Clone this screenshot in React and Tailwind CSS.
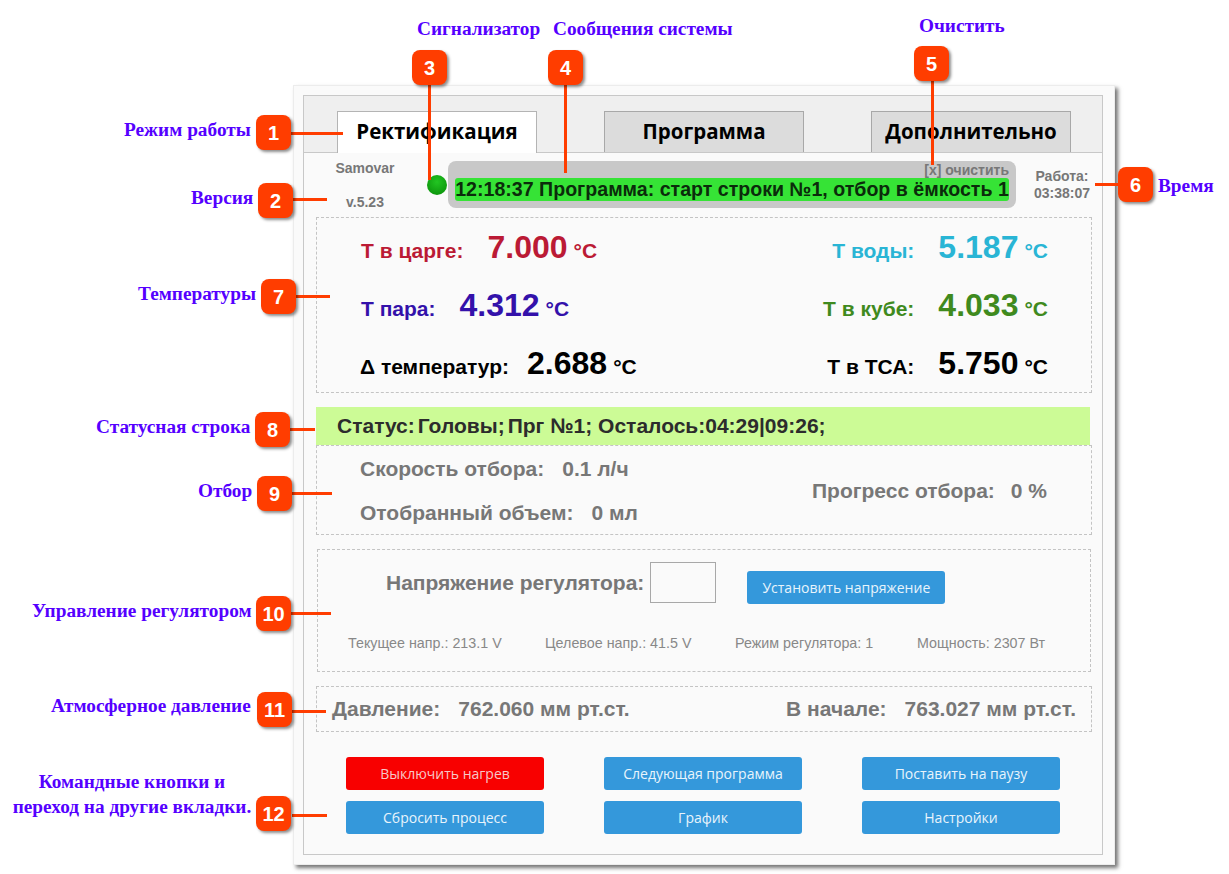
const callouts = [
  { n: 1, box: 'left-[256px] top-[115px]' },
  { n: 2, box: 'left-[258px] top-[183px]' },
  { n: 3, box: 'left-[412px] top-[50px]' },
  { n: 4, box: 'left-[548px] top-[50px]' },
  { n: 5, box: 'left-[914px] top-[46px]' },
  { n: 6, box: 'left-[1118px] top-[167px]' },
  { n: 7, box: 'left-[261px] top-[279px]' },
  { n: 8, box: 'left-[255px] top-[412px]' },
  { n: 9, box: 'left-[257px] top-[476px]' },
  { n: 10, box: 'left-[256px] top-[596px]' },
  { n: 11, box: 'left-[257px] top-[692px]' },
  { n: 12, box: 'left-[256px] top-[796px]' },
]

const lines = [
  'left-[291px] top-[132px] w-[52px] h-[3px]',
  'left-[293px] top-[198px] w-[34px] h-[3px]',
  'left-[428px] top-[83px] w-[3px] h-[97px]',
  'left-[564px] top-[83px] w-[3px] h-[90px]',
  'left-[931px] top-[80px] w-[3px] h-[85px]',
  'left-[1095px] top-[183px] w-[23px] h-[3px]',
  'left-[296px] top-[295px] w-[34px] h-[3px]',
  'left-[290px] top-[428px] w-[25px] h-[3px]',
  'left-[292px] top-[492px] w-[40px] h-[3px]',
  'left-[291px] top-[612px] w-[40px] h-[3px]',
  'left-[292px] top-[710px] w-[34px] h-[3px]',
  'left-[292px] top-[814px] w-[35px] h-[3px]',
]

const labels = [
  { text: 'Режим работы', pos: 'left-[124px] top-[120px]' },
  { text: 'Версия', pos: 'left-[191px] top-[188px]' },
  { text: 'Сигнализатор', pos: 'left-[417px] top-[19px]' },
  { text: 'Сообщения системы', pos: 'left-[553px] top-[19px]' },
  { text: 'Очистить', pos: 'left-[919px] top-[16px]' },
  { text: 'Время', pos: 'left-[1158px] top-[176px]' },
  { text: 'Температуры', pos: 'left-[138px] top-[284px]' },
  { text: 'Статусная строка', pos: 'left-[96px] top-[417px]' },
  { text: 'Отбор', pos: 'left-[198px] top-[481px]' },
  { text: 'Управление регулятором', pos: 'left-[32px] top-[601px]' },
  { text: 'Атмосферное давление', pos: 'left-[51px] top-[696px]' },
]

function Tab({ label, active = false }) {
  return (
    <div
      className={
        active
          ? 'relative top-px flex h-[42px] w-[200px] items-center justify-center border border-b-0 border-[#b4b4b4] bg-white pb-0.5 text-[20.5px] font-bold text-black'
          : 'flex h-[41px] w-[200px] items-center justify-center border border-b-0 border-[#a8a8a8] bg-[#dcdcdc] pb-0.5 text-[20.5px] font-bold text-black'
      }
    >
      {label}
    </div>
  )
}

function Temp({ label, value, color, gap = '24px' }) {
  return (
    <div className={`flex items-baseline font-bold ${color}`} style={{ gap }}>
      <span className="text-[21px]">{label}</span>
      <span className="flex items-baseline gap-[6px] text-[32px]">
        {value} <span className="text-[21px]">°C</span>
      </span>
    </div>
  )
}

function Button({ label, red = false, className = 'w-[198px]' }) {
  return (
    <button
      type="button"
      className={`h-[33px] rounded-[3px] text-center font-['Open_Sans',sans-serif] text-[14px] ${className} ${
        red ? 'bg-[#f80000] text-[#f6c8c8]' : 'bg-[#3498db] text-[#e8f4fb]'
      }`}
    >
      {label}
    </button>
  )
}

export default function App() {
  return (
    <div className="relative h-[874px] w-[1229px] overflow-hidden bg-white pl-[293px] pt-[85px] font-['Liberation_Sans',Arial,sans-serif]">
      <div className="h-[780px] w-[822px] border border-[#ececec] bg-[#fafafa] p-[9px] shadow-[3px_3px_4px_rgba(0,0,0,0.55)]">
        <div className="h-[760px] w-[800px] border border-[#c8c8c8]">
          <div className="flex h-[57px] items-end justify-between border-b border-[#c8c8c8] bg-[#efefef] pl-[33px] pr-[31px] font-['Open_Sans',sans-serif]">
            <Tab label="Ректификация" active />
            <Tab label="Программа" />
            <Tab label="Дополнительно" />
          </div>

          <div className="px-3">
            <div className="flex h-[64px]">
              <div className="flex w-[98px] shrink-0 flex-col items-center pt-[5px] text-[14px] font-bold text-[#777]">
                <span>Samovar</span>
                <span className="mt-[13px]">v.5.23</span>
              </div>
              <div className="ml-[13px] mt-[22px] h-5 w-5 shrink-0 rounded-full bg-[radial-gradient(circle_at_50%_35%,#22c522,#078a07)]" />
              <div className="ml-[1px] mt-[8px] h-[47px] w-[568px] shrink-0 rounded-lg bg-[#c8c8c8] px-[7px]">
                <div className="h-[17px] text-right text-[14px] font-bold leading-[18px] text-[#777]">[x] очистить</div>
                <div className="h-[23px] rounded-[3px] bg-[#36e336] text-center text-[19.6px] font-bold leading-[23px] whitespace-nowrap text-[#0b2b0b]">
                  12:18:37 Программа: старт строки №1, отбор в ёмкость 1
                </div>
              </div>
              <div className="ml-[10px] flex w-[72px] shrink-0 flex-col items-center pt-[15px] text-[14px] font-bold leading-[17px] text-[#777]">
                <span>Работа:</span>
                <span>03:38:07</span>
              </div>
            </div>

            <div className="flex h-[176px] w-[776px] justify-between border border-dashed border-[#c4c4c4] pb-[5px] pl-[44px] pr-[43px] pt-[5px]">
              <div className="flex flex-col justify-between">
                <Temp label="Т в царге:" value="7.000" color="text-[#bb1a35]" />
                <Temp label="Т пара:" value="4.312" color="text-[#3311aa]" />
                <div className="-ml-px">
                  <Temp label="Δ температур:" value="2.688" color="text-black" gap="18px" />
                </div>
              </div>
              <div className="flex flex-col items-end justify-between">
                <Temp label="Т воды:" value="5.187" color="text-[#29b5d5]" />
                <Temp label="Т в кубе:" value="4.033" color="text-[#3f8a1e]" />
                <Temp label="Т в ТСА:" value="5.750" color="text-black" />
              </div>
            </div>

            <div className="mt-[14px] flex h-[38px] w-[774px] items-center gap-[3px] whitespace-nowrap bg-[#ccfb96] pl-[21px] text-[21px] font-bold text-[#2c2c2c]">
              <span>Статус:</span>
              <span>Головы;</span>
              <span>Прг №1; Осталось:04:29|09:26;</span>
            </div>

            <div className="flex h-[90px] w-[776px] items-center justify-between border border-dashed border-[#c4c4c4] pl-[43px] pr-[44px] text-[21px] font-bold text-[#777]">
              <div className="flex h-full flex-col justify-between pb-[6px] pt-[7px]">
                <div className="flex gap-[18px]">
                  <span>Скорость отбора:</span>
                  <span>0.1 л/ч</span>
                </div>
                <div className="flex gap-[18px]">
                  <span>Отобранный объем:</span>
                  <span>0 мл</span>
                </div>
              </div>
              <div className="mt-[2px] flex gap-[16px]">
                <span>Прогресс отбора:</span>
                <span>0 %</span>
              </div>
            </div>

            <div className="ml-px mt-[14px] h-[123px] w-[774px] border border-dashed border-[#c4c4c4]">
              <div className="flex items-center pl-[68px] pt-[11px]">
                <span className="whitespace-nowrap text-[21px] font-bold text-[#777]">Напряжение регулятора:</span>
                <div className="ml-[6px] h-[41px] w-[66px] shrink-0 border border-[#a8a8a8]" />
                <div className="ml-[31px] mt-[10px]">
                  <Button label="Установить напряжение" />
                </div>
              </div>
              <div className="mt-[29px] flex pl-[30px] text-[14.3px] text-[#888]">
                <span className="w-[197px]">Текущее напр.: 213.1 V</span>
                <span className="w-[190px]">Целевое напр.: 41.5 V</span>
                <span className="w-[182px]">Режим регулятора: 1</span>
                <span>Мощность: 2307 Вт</span>
              </div>
            </div>

            <div className="mt-[14px] flex h-[46px] w-[776px] items-center justify-between border border-dashed border-[#c4c4c4] px-[15px] text-[21px] font-bold text-[#777]">
              <div className="flex gap-[18px]">
                <span>Давление:</span>
                <span>762.060 мм рт.ст.</span>
              </div>
              <div className="flex gap-[18px]">
                <span>В начале:</span>
                <span>763.027 мм рт.ст.</span>
              </div>
            </div>

            <div className="mt-[25px] grid grid-cols-[198px_198px_198px] gap-x-[60px] gap-y-[11px] pl-[30px]">
              <Button label="Выключить нагрев" red />
              <Button label="Следующая программа" />
              <Button label="Поставить на паузу" />
              <Button label="Сбросить процесс" />
              <Button label="График" />
              <Button label="Настройки" />
            </div>
          </div>
        </div>
      </div>

      {lines.map((pos) => (
        <div key={pos} className={`absolute bg-[#ff3d00] ${pos}`} />
      ))}
      {callouts.map((c) => (
        <div
          key={c.n}
          className={`absolute flex h-[35px] w-[35px] items-center justify-center rounded-lg bg-[#ff3d00] text-[20px] font-bold text-white shadow-[2px_2px_3px_rgba(0,0,0,0.45)] ${c.box}`}
        >
          {c.n}
        </div>
      ))}
      {labels.map((l) => (
        <div
          key={l.text}
          className={`absolute whitespace-nowrap font-['Liberation_Serif',serif] text-[19.3px] font-bold leading-5 text-[#5500ff] ${l.pos}`}
        >
          {l.text}
        </div>
      ))}
      <div className="absolute left-[12px] top-[769px] w-[240px] whitespace-nowrap text-center font-['Liberation_Serif',serif] text-[19.3px] font-bold leading-[25px] text-[#5500ff]">
        Командные кнопки и
        <br />
        переход на другие вкладки.
      </div>
    </div>
  )
}
